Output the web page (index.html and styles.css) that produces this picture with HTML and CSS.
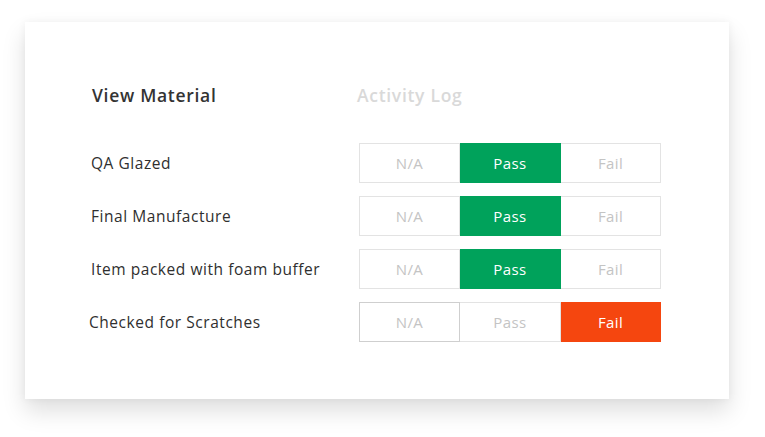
FILE: index.html
```html
<!DOCTYPE html>
<html>
<head>
<meta charset="utf-8">
<link rel="stylesheet" href="styles.css">
</head>
<body>
<div class="card">
  <div class="tabs">
    <div class="tab active">View Material</div>
    <div class="tab">Activity Log</div>
  </div>
  <div class="rows">
    <div class="row">
      <div class="label">QA Glazed</div>
      <div class="seg">
        <div class="opt">N/A</div>
        <div class="opt pass">Pass</div>
        <div class="opt">Fail</div>
      </div>
    </div>
    <div class="row">
      <div class="label">Final Manufacture</div>
      <div class="seg">
        <div class="opt">N/A</div>
        <div class="opt pass">Pass</div>
        <div class="opt">Fail</div>
      </div>
    </div>
    <div class="row">
      <div class="label">Item packed with foam buffer</div>
      <div class="seg">
        <div class="opt">N/A</div>
        <div class="opt pass">Pass</div>
        <div class="opt">Fail</div>
      </div>
    </div>
    <div class="row">
      <div class="label shift">Checked for Scratches</div>
      <div class="seg">
        <div class="opt dark">N/A</div>
        <div class="opt">Pass</div>
        <div class="opt fail">Fail</div>
      </div>
    </div>
  </div>
</div>
</body>
</html>
```
FILE: styles.css
```css
html, body {
  margin: 0;
  padding: 0;
  background: #ffffff;
}
body {
  box-sizing: border-box;
  min-height: 437px;
  font-family: "Open Sans", "DejaVu Sans", sans-serif;
  padding: 22px 0 0 25px;
}
.card {
  box-sizing: border-box;
  width: 704px;
  height: 377px;
  background: #fff;
  box-shadow: 0 12px 22px rgba(0, 0, 0, 0.13), 0 0 8px rgba(0, 0, 0, 0.05);
  padding: 60px 0 0 66px;
}
.tabs {
  display: grid;
  grid-template-columns: 266px auto;
  height: 26px;
  align-items: center;
}
.tab {
  font-size: 17.5px;
  font-weight: 600;
  letter-spacing: 0.7px;
  color: #d9d9d9;
}
.tab.active {
  color: #333;
  padding-left: 1px;
}
.rows {
  margin-top: 35px;
  display: flex;
  flex-direction: column;
  gap: 13px;
}
.row {
  display: grid;
  grid-template-columns: 268px 302px;
  align-items: center;
}
.label {
  font-size: 15.5px;
  letter-spacing: 0.55px;
  color: #2f2f2f;
  font-weight: 500;
}
.label.shift {
  margin-left: -2px;
}
.seg {
  display: grid;
  grid-template-columns: 101px 101px 100px;
  height: 40px;
}
.opt {
  box-sizing: border-box;
  border: 1px solid #e3e3e3;
  display: flex;
  align-items: center;
  justify-content: center;
  font-size: 15px;
  letter-spacing: 0.4px;
  color: #c4c4c4;
}
.opt + .opt {
  border-left: none;
}
.opt.pass {
  background: #00a25b;
  border-color: #00a25b;
  color: #fff;
}
.opt.fail {
  background: #f5460f;
  border-color: #f5460f;
  color: #fff;
}
.opt.dark {
  border-color: #cfcfcf;
}
```
